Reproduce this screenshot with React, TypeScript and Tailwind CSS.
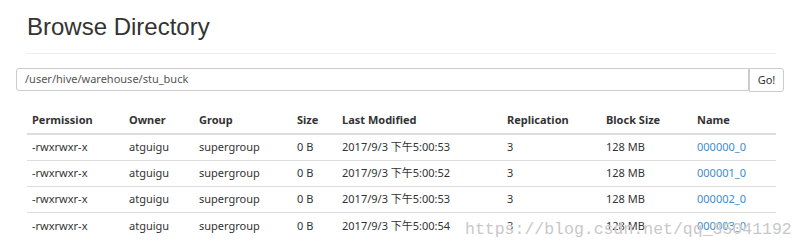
const rows = [
  { time: "2017/9/3 下午5:00:53", name: "000000_0" },
  { time: "2017/9/3 下午5:00:52", name: "000001_0" },
  { time: "2017/9/3 下午5:00:53", name: "000002_0" },
  { time: "2017/9/3 下午5:00:54", name: "000003_0" },
];

const cols = [
  { label: "Permission", w: "w-[97px]" },
  { label: "Owner", w: "w-[70px]" },
  { label: "Group", w: "w-[98px]" },
  { label: "Size", w: "w-[45px]" },
  { label: "Last Modified", w: "w-[165px]" },
  { label: "Replication", w: "w-[99px]" },
  { label: "Block Size", w: "w-[91px]" },
  { label: "Name", w: "" },
];

const font = { fontFamily: '"Noto Sans", "Noto Sans CJK SC", sans-serif' };

export default function App() {
  return (
    <div className="relative w-[806px] h-[251px] bg-white overflow-hidden" style={font}>
      <div className="pl-[27px] pr-[30px] pt-[11px]">
        <h1
          className="text-[24px] leading-[32px] text-[#333] pb-[10px] border-b border-[#eee]"
          style={{ fontFamily: '"Liberation Sans", Arial, sans-serif' }}
        >
          Browse Directory
        </h1>
      </div>

      <div className="flex pl-[16px] pr-[22px] mt-[14px]">
        <div className="flex-1 h-[23px] border border-[#ccc] rounded-l-[3px] flex items-center px-[8px] text-[11px] text-[#555]">
          /user/hive/warehouse/stu_buck
        </div>
        <div className="w-[35px] h-[24px] border border-[#ccc] rounded-r-[3px] flex items-center justify-center text-[11px] text-[#333]">
          Go!
        </div>
      </div>

      <div className="mx-[27px] w-[749px] mt-[16px] text-[11px] text-[#333]">
        <div className="flex h-[27px] items-center border-b-2 border-[#ddd] font-bold">
          {cols.map((c) => (
            <div key={c.label} className={`${c.w || "flex-1"} pl-[5px]`}>
              {c.label}
            </div>
          ))}
        </div>
        {rows.map((r, i) => (
          <div
            key={r.name}
            className={`flex h-[26px] items-center ${i < rows.length - 1 ? "border-b border-[#ddd]" : ""}`}
          >
            <div className="w-[97px] pl-[5px]">-rwxrwxr-x</div>
            <div className="w-[70px] pl-[5px]">atguigu</div>
            <div className="w-[98px] pl-[5px]">supergroup</div>
            <div className="w-[45px] pl-[5px]">0 B</div>
            <div className="w-[165px] pl-[5px]">{r.time}</div>
            <div className="w-[99px] pl-[5px]">3</div>
            <div className="w-[91px] pl-[5px]">128 MB</div>
            <div className="flex-1 pl-[5px] text-[#428bca]">{r.name}</div>
          </div>
        ))}
      </div>

      {/* page watermark */}
      <div
        className="absolute left-[465px] top-[219px] text-[16.5px] leading-[22px] text-[#c8c8c8] whitespace-nowrap"
        style={{ fontFamily: '"Liberation Mono", monospace', textShadow: "0 0 1px #fff" }}
      >
        https://blog.csdn.net/qq_35041192
      </div>
    </div>
  );
}
